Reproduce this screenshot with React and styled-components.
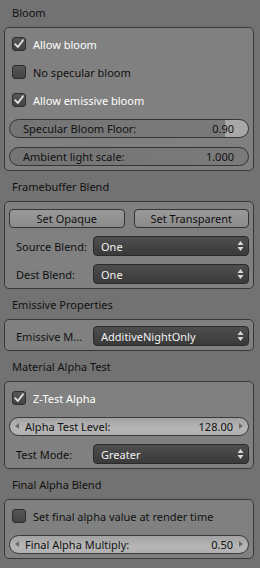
import React from "react";
import styled, { createGlobalStyle } from "styled-components";

const Global = createGlobalStyle`
  html, body { margin: 0; padding: 0; background: #727272; }
  body { font-family: "Noto Sans", "DejaVu Sans", sans-serif; font-size: 11px; color: #111; }
  * { box-sizing: border-box; }
`;

const Page = styled.div`
  width: 260px;
  height: 568px;
  padding: 0 6px 0 4px;
  display: flex;
  flex-direction: column;
  overflow: hidden;
`;

const Section = styled.section`
  display: flex;
  flex-direction: column;
  & + & { margin-top: 3px; }
`;

const Heading = styled.div`
  height: 27px;
  line-height: 25px;
  padding-left: 8px;
  color: #111;
`;

const Box = styled.div`
  background: #808080;
  border: 1px solid #383838;
  border-radius: 5px;
  padding: 6px 4px 4px 4px;
  display: flex;
  flex-direction: column;
  gap: 8px;
`;

const Row = styled.div`
  height: 20px;
  display: flex;
  align-items: center;
`;

const CheckRow = styled(Row)`
  padding-left: 3px;
  gap: 7px;
  color: ${(p) => (p.$on ? "#fff" : "#111")};
`;

const CheckBox = styled.span`
  width: 14px;
  height: 14px;
  border: 1px solid #2c2c2c;
  border-radius: 3px;
  background: linear-gradient(#565656, #444);
  display: flex;
  align-items: center;
  justify-content: center;
`;

const Slider = styled.div`
  height: 19px;
  flex: 1;
  border: 1px solid #353535;
  border-radius: 10px;
  display: flex;
  align-items: center;
  justify-content: space-between;
  padding: 0 14px 0 13px;
  color: #111;
  background: ${(p) =>
    `linear-gradient(to right, #747474 0, #7a7a7a ${p.$fill}%, #a8a8a8 ${p.$fill}%, #a8a8a8 100%)`};
`;

const NumField = styled.div`
  height: 19px;
  flex: 1;
  border: 1px solid #3a3a3a;
  border-radius: 10px;
  display: flex;
  align-items: center;
  padding: 0 5px 0 5px;
  color: #111;
  background: linear-gradient(#a2a2a2, #b6b6b6 60%, #b0b0b0);
`;

const NumLabel = styled.span`
  flex: 1;
  padding-left: 6px;
`;

const NumValue = styled.span`
  padding-right: 6px;
`;

const Arrow = styled.span`
  width: 0;
  height: 0;
  border-top: 3.5px solid transparent;
  border-bottom: 3.5px solid transparent;
  ${(p) =>
    p.$dir === "left"
      ? "border-right: 4px solid #6a6a6a;"
      : "border-left: 4px solid #6a6a6a;"}
`;

const ButtonRow = styled(Row)`
  gap: 9px;
`;

const Button = styled.div`
  flex: 1;
  height: 19px;
  border: 1px solid #353535;
  border-radius: 4px;
  background: linear-gradient(#999, #8b8b8b);
  display: flex;
  align-items: center;
  justify-content: center;
  color: #111;
`;

const FieldRow = styled(Row)``;

const Label = styled.span`
  width: 84px;
  padding-left: 7px;
  padding-right: 4px;
  white-space: nowrap;
  color: #111;
`;

const Select = styled.div`
  flex: 1;
  height: 20px;
  border: 1px solid #2a2a2a;
  border-radius: 4px;
  background: linear-gradient(#4e4e4e, #3a3a3a);
  color: #f2f2f2;
  display: flex;
  align-items: center;
  justify-content: space-between;
  padding: 0 4px 0 7px;
`;

const Updown = () => (
  <svg width="7" height="12" viewBox="0 0 7 12">
    <path d="M3.5 1 L6.5 5 L0.5 5 Z" fill="#d8d8d8" />
    <path d="M3.5 11 L6.5 7 L0.5 7 Z" fill="#d8d8d8" />
  </svg>
);

const Check = () => (
  <svg width="12" height="12" viewBox="0 0 12 12">
    <path d="M2.2 6.2 L4.8 9 L10 2.2" fill="none" stroke="#e8e8e8" strokeWidth="1.8" strokeLinecap="round" strokeLinejoin="round" />
  </svg>
);

const CheckItem = ({ on, children }) => (
  <CheckRow $on={on}>
    <CheckBox>{on && <Check />}</CheckBox>
    <span>{children}</span>
  </CheckRow>
);

const SelectItem = ({ label, value }) => (
  <FieldRow>
    <Label>{label}</Label>
    <Select>
      <span>{value}</span>
      <Updown />
    </Select>
  </FieldRow>
);

const NumItem = ({ label, value }) => (
  <Row>
    <NumField>
      <Arrow $dir="left" />
      <NumLabel>{label}</NumLabel>
      <NumValue>{value}</NumValue>
      <Arrow $dir="right" />
    </NumField>
  </Row>
);

const SliderItem = ({ label, value, fill }) => (
  <Row>
    <Slider $fill={fill}>
      <span>{label}</span>
      <span>{value}</span>
    </Slider>
  </Row>
);

export default function App() {
  return (
    <>
      <Global />
      <Page>
        <Section>
          <Heading>Bloom</Heading>
          <Box>
            <CheckItem on>Allow bloom</CheckItem>
            <CheckItem>No specular bloom</CheckItem>
            <CheckItem on>Allow emissive bloom</CheckItem>
            <SliderItem label="Specular Bloom Floor:" value="0.90" fill={90.4} />
            <SliderItem label="Ambient light scale:" value="1.000" fill={100} />
          </Box>
        </Section>
        <Section>
          <Heading>Framebuffer Blend</Heading>
          <Box>
            <ButtonRow>
              <Button>Set Opaque</Button>
              <Button>Set Transparent</Button>
            </ButtonRow>
            <SelectItem label="Source Blend:" value="One" />
            <SelectItem label="Dest Blend:" value="One" />
          </Box>
        </Section>
        <Section>
          <Heading>Emissive Properties</Heading>
          <Box>
            <SelectItem label="Emissive M..." value="AdditiveNightOnly" />
          </Box>
        </Section>
        <Section>
          <Heading>Material Alpha Test</Heading>
          <Box>
            <CheckItem on>Z-Test Alpha</CheckItem>
            <NumItem label="Alpha Test Level:" value="128.00" />
            <SelectItem label="Test Mode:" value="Greater" />
          </Box>
        </Section>
        <Section>
          <Heading>Final Alpha Blend</Heading>
          <Box>
            <CheckItem>Set final alpha value at render time</CheckItem>
            <NumItem label="Final Alpha Multiply:" value="0.50" />
          </Box>
        </Section>
      </Page>
    </>
  );
}
